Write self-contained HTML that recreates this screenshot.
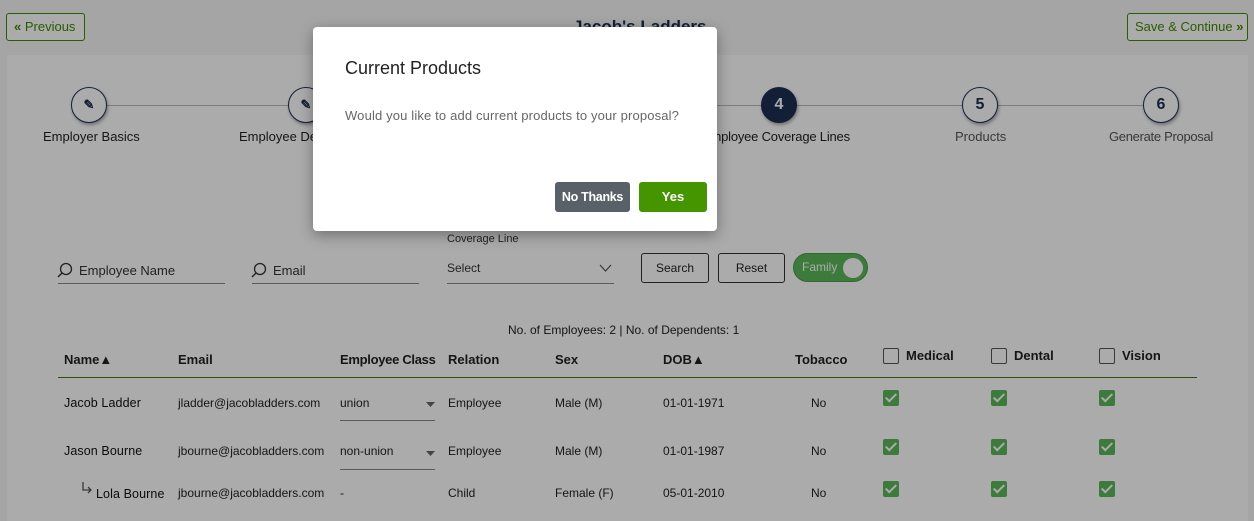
<!DOCTYPE html>
<html><head><meta charset="utf-8"><style>
*{box-sizing:border-box;margin:0;padding:0}
html,body{width:1254px;height:521px;overflow:hidden}
body{background:#f6f6f6;font-family:"Liberation Sans",sans-serif;position:relative;color:#222}
.a{position:absolute;white-space:nowrap}
.btn{border:1px solid #3f8a00;color:#3f8a00;border-radius:3px;font-size:13px;height:28px;line-height:26px;padding:0 7px;background:#fff}
.panel{position:absolute;left:7px;top:55px;width:1241px;height:466px;background:#fff}
.circ{position:absolute;width:36px;height:36px;border-radius:50%;border:1.5px solid #1b2f52;background:#fff;box-shadow:1px 2px 3px rgba(0,0,0,.35);text-align:center;line-height:33px;font-size:16px;font-weight:bold;color:#1b2f52}
.lbl{font-size:13px;color:#222}
.th{font-size:13px;font-weight:bold;color:#222}
.td{font-size:12px;color:#222}
.nm{font-size:12.5px;color:#111;letter-spacing:.1px}
.cb{position:absolute;width:16px;height:16px;border:1px solid #555;border-radius:2px;background:#fff}
.ck{position:absolute;width:16px;height:16px;border-radius:2px;background:#5cb85c}
.ck:after{content:"";position:absolute;left:5px;top:1px;width:4px;height:9px;border:solid #fff;border-width:0 2px 2px 0;transform:rotate(45deg)}
.ul{position:absolute;height:1px;background:#888}
.ov{position:absolute;left:0;top:0;width:1254px;height:521px;background:rgba(0,0,0,.33)}
</style></head><body>
<div class="a btn" style="left:6px;top:13px;width:79px"><b>&#171;</b> Previous</div>
<div class="a" style="left:573px;top:17px;font-size:17px;font-weight:bold;color:#1b2f52">Jacob's Ladders</div>
<div class="a btn" style="left:1127px;top:13px;width:121px">Save &amp; Continue <b>&#187;</b></div>
<div class="panel"></div>
<div class="a" style="left:89px;top:105px;width:1072px;height:1px;background:#bbb"></div>
<div class="circ" style="left:71px;top:87px;font-size:13px">&#9998;</div>
<div class="circ" style="left:288px;top:87px;font-size:13px">&#9998;</div>
<div class="circ" style="left:761px;top:87px;background:#1b2f52;color:#fff">4</div>
<div class="circ" style="left:962px;top:87px">5</div>
<div class="circ" style="left:1143px;top:87px">6</div>
<div class="a lbl" style="left:43px;top:129px">Employer Basics</div>
<div class="a lbl" style="left:239px;top:129px">Employee Details</div>
<div class="a lbl" style="left:702px;top:129px;letter-spacing:-.2px">Employee Coverage Lines</div>
<div class="a lbl" style="left:955px;top:129px;color:#555">Products</div>
<div class="a lbl" style="left:1109px;top:129px;color:#555;letter-spacing:-.3px">Generate Proposal</div>

<svg class="a" style="left:57px;top:262px" width="16" height="16" viewBox="0 0 16 16"><circle cx="9" cy="7" r="5.5" fill="none" stroke="#333" stroke-width="1.3"/><path d="M5 11L1 15" stroke="#333" stroke-width="1.5"/></svg>
<div class="a" style="left:79px;top:263px;font-size:13px;color:#333">Employee Name</div>
<div class="ul" style="left:58px;top:283px;width:167px"></div>
<svg class="a" style="left:251px;top:262px" width="16" height="16" viewBox="0 0 16 16"><circle cx="9" cy="7" r="5.5" fill="none" stroke="#333" stroke-width="1.3"/><path d="M5 11L1 15" stroke="#333" stroke-width="1.5"/></svg>
<div class="a" style="left:273px;top:263px;font-size:13px;color:#333">Email</div>
<div class="ul" style="left:252px;top:283px;width:167px"></div>
<div class="a" style="left:447px;top:233px;font-size:11px;color:#333">Coverage Line</div>
<div class="a" style="left:447px;top:261px;font-size:12px;color:#333">Select</div>
<svg class="a" style="left:599px;top:264px" width="13" height="8" viewBox="0 0 13 8"><path d="M1 1L6.5 7L12 1" fill="none" stroke="#555" stroke-width="1.2"/></svg>
<div class="ul" style="left:447px;top:283px;width:167px"></div>
<div class="a" style="left:641px;top:253px;width:68px;height:30px;border:1px solid #333;border-radius:3px;font-size:12px;text-align:center;line-height:28px;background:#fff">Search</div>
<div class="a" style="left:718px;top:253px;width:67px;height:30px;border:1px solid #333;border-radius:3px;font-size:12px;text-align:center;line-height:28px;background:#fff">Reset</div>
<div class="a" style="left:793px;top:253px;width:75px;height:29px;border-radius:15px;background:#5cb85c;border:1px solid #4a9a4a;color:#fff;font-size:12px;line-height:27px;padding-left:8px">Family<span style="position:absolute;right:4px;top:4px;width:20px;height:20px;border-radius:50%;background:#fff"></span></div>

<div class="a" style="left:508px;top:323px;font-size:12px;color:#222">No. of Employees: 2 | No. of Dependents: 1</div>
<div class="a th" style="left:64px;top:352px">Name&#9650;</div>
<div class="a th" style="left:178px;top:352px">Email</div>
<div class="a th" style="left:340px;top:352px;letter-spacing:-.3px">Employee Class</div>
<div class="a th" style="left:448px;top:352px">Relation</div>
<div class="a th" style="left:555px;top:352px">Sex</div>
<div class="a th" style="left:663px;top:352px">DOB&#9650;</div>
<div class="a th" style="left:795px;top:352px">Tobacco</div>
<div class="cb" style="left:883px;top:348px"></div><div class="a th" style="left:906px;top:348px">Medical</div>
<div class="cb" style="left:991px;top:348px"></div><div class="a th" style="left:1014px;top:348px">Dental</div>
<div class="cb" style="left:1099px;top:348px"></div><div class="a th" style="left:1122px;top:348px">Vision</div>
<div class="a" style="left:58px;top:377px;width:1139px;height:1px;background:#3f7a10"></div>

<div class="a nm" style="left:64px;top:396px">Jacob Ladder</div>
<div class="a td" style="left:178px;top:396px">jladder@jacobladders.com</div>
<div class="a td" style="left:340px;top:396px">union</div>
<svg class="a" style="left:426px;top:402px" width="9" height="5"><path d="M0 0H9L4.5 5Z" fill="#666"/></svg>
<div class="ul" style="left:340px;top:420px;width:95px"></div>
<div class="a td" style="left:448px;top:396px">Employee</div>
<div class="a td" style="left:555px;top:396px">Male (M)</div>
<div class="a td" style="left:663px;top:396px">01-01-1971</div>
<div class="a td" style="left:811px;top:396px">No</div>
<div class="ck" style="left:883px;top:390px"></div><div class="ck" style="left:991px;top:390px"></div><div class="ck" style="left:1099px;top:390px"></div>

<div class="a nm" style="left:64px;top:444px">Jason Bourne</div>
<div class="a td" style="left:178px;top:444px">jbourne@jacobladders.com</div>
<div class="a td" style="left:340px;top:444px">non-union</div>
<svg class="a" style="left:426px;top:451px" width="9" height="5"><path d="M0 0H9L4.5 5Z" fill="#666"/></svg>
<div class="ul" style="left:340px;top:469px;width:95px"></div>
<div class="a td" style="left:448px;top:444px">Employee</div>
<div class="a td" style="left:555px;top:444px">Male (M)</div>
<div class="a td" style="left:663px;top:444px">01-01-1987</div>
<div class="a td" style="left:811px;top:444px">No</div>
<div class="ck" style="left:883px;top:439px"></div><div class="ck" style="left:991px;top:439px"></div><div class="ck" style="left:1099px;top:439px"></div>

<svg class="a" style="left:81px;top:482px" width="12" height="12" viewBox="0 0 12 12"><path d="M2 0V8H10M7 5L10 8L7 11" fill="none" stroke="#555" stroke-width="1.3"/></svg>
<div class="a nm" style="left:96px;top:487px">Lola Bourne</div>
<div class="a td" style="left:178px;top:486px">jbourne@jacobladders.com</div>
<div class="a td" style="left:340px;top:486px">-</div>
<div class="a td" style="left:448px;top:486px">Child</div>
<div class="a td" style="left:555px;top:486px">Female (F)</div>
<div class="a td" style="left:663px;top:486px">05-01-2010</div>
<div class="a td" style="left:811px;top:486px">No</div>
<div class="ck" style="left:883px;top:481px"></div><div class="ck" style="left:991px;top:481px"></div><div class="ck" style="left:1099px;top:481px"></div>

<div class="ov"></div>
<div class="a" style="left:313px;top:27px;width:404px;height:204px;background:#fff;border-radius:4px;box-shadow:0 4px 14px rgba(0,0,0,.35)">
<div class="a" style="left:32px;top:31px;font-size:18px;color:#222">Current Products</div>
<div class="a" style="left:32px;top:81px;font-size:13px;color:#666;letter-spacing:.15px">Would you like to add current products to your proposal?</div>
<div class="a" style="left:242px;top:155px;width:75px;height:30px;background:#5a6068;border-radius:3px;color:#fff;font-size:12.5px;font-weight:bold;text-align:center;line-height:30px;letter-spacing:-.3px">No Thanks</div>
<div class="a" style="left:326px;top:155px;width:68px;height:30px;background:#449500;border-radius:3px;color:#fff;font-size:13px;font-weight:bold;text-align:center;line-height:30px">Yes</div>
</div>
</body></html>
